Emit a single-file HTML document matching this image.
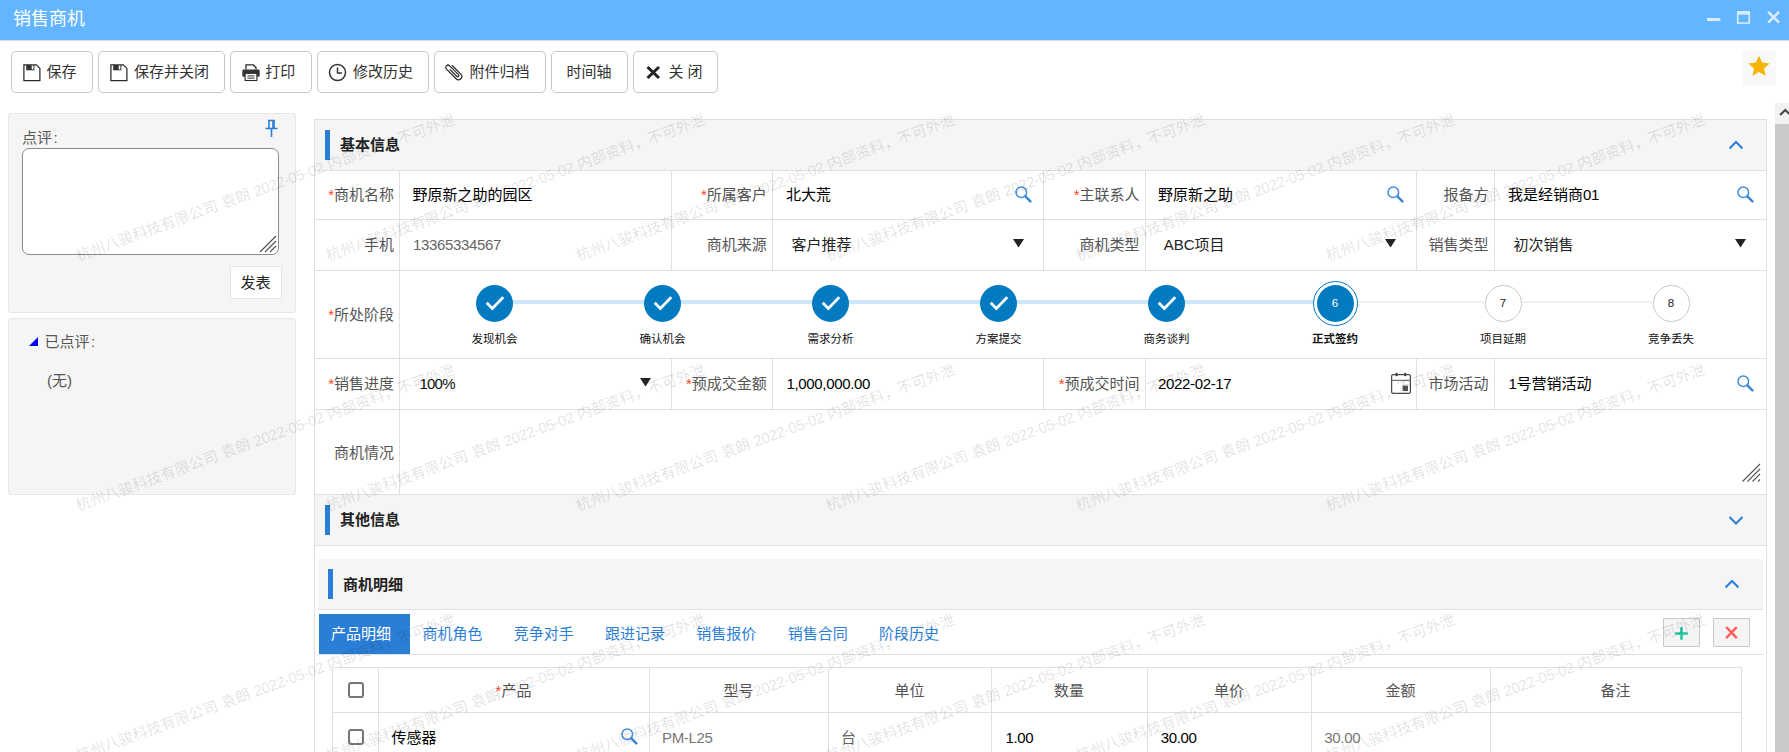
<!DOCTYPE html>
<html lang="zh-CN"><head><meta charset="utf-8"><title>销售商机</title>
<style>
*{box-sizing:border-box;margin:0;padding:0}
html,body{width:1789px;height:752px;overflow:hidden;background:#fff}
body{font-family:"Liberation Sans","Noto Sans CJK SC",sans-serif;font-size:15px;color:#333;position:relative}
.abs{position:absolute}
.t{position:absolute;white-space:nowrap;line-height:20px;height:20px}
.lbl{color:#555;text-align:right}
.val{color:#000}
.num{letter-spacing:-0.34px}
.req{color:#ff4422}
.hl{position:absolute;height:1px;background:#e0e0e0}
.vl{position:absolute;width:1px;background:#e0e0e0}
.btn{position:absolute;top:51px;height:42px;border:1px solid #c6c6c6;border-radius:5px;background:#fff}
.sechead{position:absolute;background:#f5f5f5}
.bar{position:absolute;width:5px;height:30px;background:#2b7ed6}
.sect{position:absolute;font-weight:bold;color:#222;white-space:nowrap;line-height:20px}
.wm{position:absolute;white-space:nowrap;color:rgba(0,0,0,0.12);word-spacing:0.3px;font-size:15px;line-height:20px;height:20px;transform-origin:0 100%;transform:rotate(-20deg);pointer-events:none}
.stepl{position:absolute;font-size:11.5px;color:#111;white-space:nowrap;text-align:center;width:100px;line-height:14px}
.tab{position:absolute;top:614px;height:40px;line-height:39px;color:#2b7ed6;white-space:nowrap}
</style></head>
<body>
<div class="abs" style="left:0;top:0;width:1789px;height:40px;background:#63b5ff"></div>
<div class="abs" style="left:0;top:40px;width:1789px;height:1px;background:#d9d9d9"></div>
<div class="t" style="left:13px;top:6.6px;font-size:18px;line-height:24px;height:24px;color:#fff">销售商机</div>
<svg class="abs" style="left:1700.9px;top:5px" width="84" height="26" viewBox="0 0 84 26"><rect x="6" y="13" width="13.3" height="3.1" fill="#d8ecff"/><rect x="36.7" y="7.5" width="11.6" height="10.6" fill="none" stroke="#d8ecff" stroke-width="1.6"/><rect x="36" y="6" width="13" height="3.7" fill="#d8ecff"/><path d="M67.2 6.8 L78 17.6 M78 6.8 L67.2 17.6" stroke="#d8ecff" stroke-width="2.6" stroke-linecap="butt"/></svg>
<div class="btn" style="left:11.3px;width:81.4px"></div>
<div class="btn" style="left:98.4px;width:126.2px"></div>
<div class="btn" style="left:230.4px;width:81.4px"></div>
<div class="btn" style="left:317.3px;width:111.4px"></div>
<div class="btn" style="left:434.3px;width:111.4px"></div>
<div class="btn" style="left:551.2px;width:76.4px"></div>
<div class="btn" style="left:633.1px;width:85.4px"></div>
<div class="t" style="left:46.5px;top:62px;">保存</div>
<div class="t" style="left:134px;top:62px;">保存并关闭</div>
<div class="t" style="left:265.3px;top:62px;">打印</div>
<div class="t" style="left:353px;top:62px;">修改历史</div>
<div class="t" style="left:469.6px;top:62px;">附件归档</div>
<div class="t" style="left:566.5px;top:62px;">时间轴</div>
<div class="t" style="left:668.4px;top:62px;">关 闭</div>
<svg class="abs" style="left:22.5px;top:63.9px" width="18" height="18" viewBox="0 0 18 18"><path d="M0.9 0.9 H13.4 L16.9 4.4 V16.7 H0.9 Z" fill="#fff" stroke="#2a2a2a" stroke-width="1.25" stroke-linejoin="miter"/><rect x="3.2" y="1" width="8.2" height="5.3" fill="#333"/><rect x="8.7" y="1.5" width="1.7" height="3.9" fill="#fff"/></svg>
<svg class="abs" style="left:109.6px;top:63.9px" width="18" height="18" viewBox="0 0 18 18"><path d="M0.9 0.9 H13.4 L16.9 4.4 V16.7 H0.9 Z" fill="#fff" stroke="#2a2a2a" stroke-width="1.25" stroke-linejoin="miter"/><rect x="3.2" y="1" width="8.2" height="5.3" fill="#333"/><rect x="8.7" y="1.5" width="1.7" height="3.9" fill="#fff"/></svg>
<svg class="abs" style="left:241.5px;top:63.8px" width="18" height="18" viewBox="0 0 18 18"><path d="M4 5.6 V0.9 H11.3 L14 3.4 V5.6" fill="#fff" stroke="#2a2a2a" stroke-width="1.3"/><rect x="0.3" y="5.4" width="17.4" height="7.4" rx="1.4" fill="#333"/><rect x="3.1" y="9.3" width="11.8" height="7.2" fill="#fff" stroke="#2a2a2a" stroke-width="1.1"/><rect x="5.4" y="11.4" width="7.2" height="1" fill="#333"/><rect x="5.4" y="13.6" width="7.2" height="1" fill="#333"/></svg>
<svg class="abs" style="left:328px;top:63px" width="19" height="19" viewBox="0 0 19 19"><circle cx="9.5" cy="9.5" r="8" fill="none" stroke="#333" stroke-width="1.5"/><path d="M9.5 4.5 V10 H14" fill="none" stroke="#333" stroke-width="1.5"/></svg>
<svg class="abs" style="left:443.8px;top:62px" width="20" height="20" viewBox="0 0 20 20"><g transform="rotate(-45 10 10)"><path d="M13.3 4.5 V16.3 A3.3 3.3 0 0 1 6.7 16.3 V2.6 A2.3 2.3 0 0 1 11.3 2.6 V15 A1.2 1.2 0 0 1 8.9 15 V5.5" fill="none" stroke="#2a2a2a" stroke-width="1.25" stroke-linecap="round"/></g></svg>
<svg class="abs" style="left:645px;top:64px" width="17" height="17" viewBox="0 0 17 17"><path d="M2.5 3 L14 14 M14 3 L2.5 14" stroke="#222" stroke-width="3" stroke-linecap="butt"/></svg>
<div class="abs" style="left:1742px;top:51px;width:34px;height:35px;background:#f8f8f8"></div>
<svg class="abs" style="left:1747px;top:54px" width="24" height="24" viewBox="0 0 24 24"><path d="M12 1.8 L15.1 8.6 L22.6 9.4 L17 14.4 L18.6 21.8 L12 18 L5.4 21.8 L7 14.4 L1.4 9.4 L8.9 8.6 Z" fill="#f5b400"/></svg>
<div class="abs" style="left:8px;top:113px;width:288px;height:200px;background:#f5f5f5;border:1px solid #e6e6e6;border-radius:3px"></div>
<div class="abs" style="left:8px;top:318px;width:288px;height:177px;background:#f5f5f5;border:1px solid #e6e6e6;border-radius:3px"></div>
<div class="t" style="left:22px;top:128px;color:#555">点评<span style="margin-left:1.5px">:</span></div>
<div class="abs" style="left:22px;top:148px;width:257px;height:107px;background:#fff;border:1px solid #8a8a8a;border-radius:7px"></div>
<svg class="abs" style="left:258px;top:234px" width="20" height="20" viewBox="0 0 20 20"><path d="M2 18 L18 2 M7 18 L18 7 M12 18 L18 12" stroke="#555" stroke-width="1.2"/></svg>
<svg class="abs" style="left:264px;top:119px" width="15" height="19" viewBox="0 0 15 19"><path d="M4 1.5 H11 M5 1.5 V9 M10 1.5 V9 M1.5 9.5 H13.5 M7.5 9.5 V18" fill="none" stroke="#2b7ed6" stroke-width="1.6"/><rect x="8.2" y="2" width="1.8" height="7" fill="#2b7ed6"/></svg>
<div class="abs" style="left:230px;top:266px;width:52px;height:33px;background:#fff;border:1px solid #e6e6e6"></div>
<div class="t" style="left:240.5px;top:273px;color:#222">发表</div>
<svg class="abs" style="left:28px;top:336px" width="11" height="11" viewBox="0 0 11 11"><path d="M1 10 H10 V1 Z" fill="#0000f0"/></svg>
<div class="t" style="left:44.5px;top:331.7px;color:#555">已点评<span style="margin-left:1.5px">:</span></div>
<div class="t" style="left:47px;top:371px;color:#555">(无)</div>
<div class="vl" style="left:314px;top:119px;height:640px"></div>
<div class="vl" style="left:1766px;top:119px;height:640px"></div>
<div class="sechead" style="left:315px;top:120px;width:1451px;height:50px"></div>
<div class="hl" style="left:314px;top:119px;width:1453px"></div>
<div class="bar" style="left:325px;top:130px"></div>
<div class="sect" style="left:340px;top:135px">基本信息</div>
<svg class="abs" style="left:1727.8px;top:139px" width="16" height="12" viewBox="0 0 16 12"><path d="M1.5 9.5 L8 3 L14.5 9.5" fill="none" stroke="#2b7ed6" stroke-width="2"/></svg>
<div class="hl" style="left:314px;top:170px;width:1453px"></div>
<div class="hl" style="left:314px;top:219px;width:1453px"></div>
<div class="hl" style="left:314px;top:270px;width:1453px"></div>
<div class="hl" style="left:314px;top:358px;width:1453px"></div>
<div class="hl" style="left:314px;top:409px;width:1453px"></div>
<div class="hl" style="left:314px;top:494px;width:1453px"></div>
<div class="hl" style="left:314px;top:545px;width:1453px"></div>
<div class="vl" style="left:399px;top:170px;height:324px"></div>
<div class="vl" style="left:671px;top:170px;height:100px"></div>
<div class="vl" style="left:671px;top:358px;height:51px"></div>
<div class="vl" style="left:772px;top:170px;height:100px"></div>
<div class="vl" style="left:772px;top:358px;height:51px"></div>
<div class="vl" style="left:1043px;top:170px;height:100px"></div>
<div class="vl" style="left:1043px;top:358px;height:51px"></div>
<div class="vl" style="left:1145px;top:170px;height:100px"></div>
<div class="vl" style="left:1145px;top:358px;height:51px"></div>
<div class="vl" style="left:1416px;top:170px;height:100px"></div>
<div class="vl" style="left:1416px;top:358px;height:51px"></div>
<div class="vl" style="left:1494px;top:170px;height:100px"></div>
<div class="vl" style="left:1494px;top:358px;height:51px"></div>
<div class="t lbl" style="right:1395px;top:185.3px"><span class="req">*</span>商机名称</div>
<div class="t val" style="left:412.5px;top:184.5px;">野原新之助的园区</div>
<div class="t lbl" style="right:1022.2px;top:185.3px"><span class="req">*</span>所属客户</div>
<div class="t val" style="left:786px;top:184.5px;">北大荒</div>
<svg class="abs" style="left:1014px;top:184.9px" width="20" height="20" viewBox="0 0 20 20"><circle cx="7.3" cy="7.3" r="5.3" fill="none" stroke="#3f8cdb" stroke-width="1.5"/><path d="M11.4 11.4 L16.4 16.4" stroke="#3a86d2" stroke-width="2.5" stroke-linecap="round"/></svg>
<div class="t lbl" style="right:649.5px;top:185.3px"><span class="req">*</span>主联系人</div>
<div class="t val" style="left:1158px;top:184.5px;">野原新之助</div>
<svg class="abs" style="left:1386px;top:184.9px" width="20" height="20" viewBox="0 0 20 20"><circle cx="7.3" cy="7.3" r="5.3" fill="none" stroke="#3f8cdb" stroke-width="1.5"/><path d="M11.4 11.4 L16.4 16.4" stroke="#3a86d2" stroke-width="2.5" stroke-linecap="round"/></svg>
<div class="t lbl" style="right:300.5px;top:185.3px">报备方</div>
<div class="t val" style="left:1508px;top:184.5px;">我是经销商<span class="num">01</span></div>
<svg class="abs" style="left:1736px;top:184.9px" width="20" height="20" viewBox="0 0 20 20"><circle cx="7.3" cy="7.3" r="5.3" fill="none" stroke="#3f8cdb" stroke-width="1.5"/><path d="M11.4 11.4 L16.4 16.4" stroke="#3a86d2" stroke-width="2.5" stroke-linecap="round"/></svg>
<div class="t lbl" style="right:1395px;top:235.3px">手机</div>
<div class="t num" style="left:413px;top:234.5px;color:#666">13365334567</div>
<div class="t lbl" style="right:1022.2px;top:235.3px">商机来源</div>
<div class="t " style="left:791.5px;top:234.5px;color:#222">客户推荐</div>
<svg class="abs" style="left:1013px;top:238.6px" width="11" height="9" viewBox="0 0 11 9"><path d="M0 0 H11 L5.5 8.5 Z" fill="#222"/></svg>
<div class="t lbl" style="right:649.5px;top:235.3px">商机类型</div>
<div class="t " style="left:1163.7px;top:234.5px;color:#222">ABC项目</div>
<svg class="abs" style="left:1385.3px;top:238.6px" width="11" height="9" viewBox="0 0 11 9"><path d="M0 0 H11 L5.5 8.5 Z" fill="#222"/></svg>
<div class="t lbl" style="right:300.5px;top:235.3px">销售类型</div>
<div class="t " style="left:1513.5px;top:234.5px;color:#222">初次销售</div>
<svg class="abs" style="left:1734.7px;top:238.6px" width="11" height="9" viewBox="0 0 11 9"><path d="M0 0 H11 L5.5 8.5 Z" fill="#222"/></svg>
<div class="t lbl" style="right:1395px;top:304.8px"><span class="req">*</span>所处阶段</div>
<div class="t lbl" style="right:1395px;top:374.3px"><span class="req">*</span>销售进度</div>
<div class="t " style="left:419.5px;top:373.5px;color:#111;letter-spacing:-0.8px">100%</div>
<svg class="abs" style="left:640px;top:378px" width="11" height="9" viewBox="0 0 11 9"><path d="M0 0 H11 L5.5 8.5 Z" fill="#222"/></svg>
<div class="t lbl" style="right:1022.2px;top:374.3px"><span class="req">*</span>预成交金额</div>
<div class="t val num" style="left:786.5px;top:373.5px;">1,000,000.00</div>
<div class="t lbl" style="right:649.5px;top:374.3px"><span class="req">*</span>预成交时间</div>
<div class="t val num" style="left:1158px;top:373.5px;">2022-02-17</div>
<div class="t lbl" style="right:300.5px;top:374.3px">市场活动</div>
<div class="t val" style="left:1508.5px;top:373.5px;"><span class="num">1</span>号营销活动</div>
<svg class="abs" style="left:1736px;top:373.9px" width="20" height="20" viewBox="0 0 20 20"><circle cx="7.3" cy="7.3" r="5.3" fill="none" stroke="#3f8cdb" stroke-width="1.5"/><path d="M11.4 11.4 L16.4 16.4" stroke="#3a86d2" stroke-width="2.5" stroke-linecap="round"/></svg>
<div class="t lbl" style="right:1395px;top:443.3px">商机情况</div>
<svg class="abs" style="left:1390px;top:372px" width="22" height="23" viewBox="0 0 22 23"><rect x="1.6" y="2.5" width="18.8" height="18.8" rx="1.6" fill="#fff" stroke="#4a4a4a" stroke-width="1.25"/><path d="M1.6 8.4 H20.4" stroke="#777" stroke-width="1.3"/><rect x="5.4" y="0.8" width="2.4" height="3.4" rx="1.2" fill="#444"/><rect x="14" y="0.8" width="2.4" height="3.4" rx="1.2" fill="#444"/><rect x="12.6" y="13.6" width="5.4" height="5.4" fill="#555"/></svg>
<svg class="abs" style="left:1741px;top:463px" width="21" height="21" viewBox="0 0 21 21"><path d="M1.5 18.5 L19 1 M6.5 18.5 L19 6 M11.5 18.5 L19 11 M17 18.5 L19 16.5" stroke="#555" stroke-width="1.1"/></svg>
<div class="abs" style="left:494.5px;top:300px;width:840.5px;height:4px;background:#cfe7fa"></div>
<div class="abs" style="left:1335px;top:301px;width:336px;height:2px;background:#f0f0f0"></div>
<div class="abs" style="left:476px;top:285px;width:37px;height:37px;border-radius:50%;background:#047bc1"></div>
<svg class="abs" style="left:482.5px;top:293.5px" width="24" height="20" viewBox="-12 -10 24 20"><path d="M-8.3 -1.3 L-2.6 4.4 L8.3 -6.9" fill="none" stroke="#fff" stroke-width="2.8"/></svg>
<div class="stepl" style="left:444.5px;top:332px;">发现机会</div>
<div class="abs" style="left:644px;top:285px;width:37px;height:37px;border-radius:50%;background:#047bc1"></div>
<svg class="abs" style="left:650.5px;top:293.5px" width="24" height="20" viewBox="-12 -10 24 20"><path d="M-8.3 -1.3 L-2.6 4.4 L8.3 -6.9" fill="none" stroke="#fff" stroke-width="2.8"/></svg>
<div class="stepl" style="left:612.5px;top:332px;">确认机会</div>
<div class="abs" style="left:812px;top:285px;width:37px;height:37px;border-radius:50%;background:#047bc1"></div>
<svg class="abs" style="left:818.5px;top:293.5px" width="24" height="20" viewBox="-12 -10 24 20"><path d="M-8.3 -1.3 L-2.6 4.4 L8.3 -6.9" fill="none" stroke="#fff" stroke-width="2.8"/></svg>
<div class="stepl" style="left:780.5px;top:332px;">需求分析</div>
<div class="abs" style="left:980px;top:285px;width:37px;height:37px;border-radius:50%;background:#047bc1"></div>
<svg class="abs" style="left:986.5px;top:293.5px" width="24" height="20" viewBox="-12 -10 24 20"><path d="M-8.3 -1.3 L-2.6 4.4 L8.3 -6.9" fill="none" stroke="#fff" stroke-width="2.8"/></svg>
<div class="stepl" style="left:948.5px;top:332px;">方案提交</div>
<div class="abs" style="left:1148px;top:285px;width:37px;height:37px;border-radius:50%;background:#047bc1"></div>
<svg class="abs" style="left:1154.5px;top:293.5px" width="24" height="20" viewBox="-12 -10 24 20"><path d="M-8.3 -1.3 L-2.6 4.4 L8.3 -6.9" fill="none" stroke="#fff" stroke-width="2.8"/></svg>
<div class="stepl" style="left:1116.5px;top:332px;">商务谈判</div>
<div class="abs" style="left:1312.5px;top:280.5px;width:45px;height:45px;border-radius:50%;border:1.5px solid #047bc1;background:#fff"></div>
<div class="abs" style="left:1316.5px;top:284.5px;width:37px;height:37px;border-radius:50%;background:#047bc1"></div>
<div class="t" style="left:1316.5px;top:293px;width:37px;text-align:center;color:#fff;font-size:11.5px">6</div>
<div class="stepl" style="left:1285px;top:332px;font-weight:bold;">正式签约</div>
<div class="abs" style="left:1484.5px;top:285px;width:37px;height:37px;border-radius:50%;background:#fff;border:1px solid #c8c8c8"></div>
<div class="t" style="left:1484.5px;top:293px;width:37px;text-align:center;color:#222;font-size:11.5px">7</div>
<div class="stepl" style="left:1453px;top:332px;">项目延期</div>
<div class="abs" style="left:1652.5px;top:285px;width:37px;height:37px;border-radius:50%;background:#fff;border:1px solid #c8c8c8"></div>
<div class="t" style="left:1652.5px;top:293px;width:37px;text-align:center;color:#222;font-size:11.5px">8</div>
<div class="stepl" style="left:1621px;top:332px;">竞争丢失</div>
<div class="sechead" style="left:315px;top:495px;width:1451px;height:50px"></div>
<div class="bar" style="left:325px;top:505px"></div>
<div class="sect" style="left:340px;top:510px">其他信息</div>
<svg class="abs" style="left:1727.8px;top:513.6px" width="16" height="12" viewBox="0 0 16 12"><path d="M1.5 3 L8 9.5 L14.5 3" fill="none" stroke="#2b7ed6" stroke-width="2"/></svg>
<div class="sechead" style="left:318px;top:559px;width:1445px;height:50px"></div>
<div class="hl" style="left:318px;top:609px;width:1445px"></div>
<div class="bar" style="left:328px;top:569px"></div>
<div class="sect" style="left:343px;top:575px">商机明细</div>
<svg class="abs" style="left:1724px;top:578px" width="16" height="12" viewBox="0 0 16 12"><path d="M1.5 9.5 L8 3 L14.5 9.5" fill="none" stroke="#2b7ed6" stroke-width="2"/></svg>
<div class="abs" style="left:319px;top:614px;width:90.5px;height:40px;background:#2b7ed6"></div>
<div class="hl" style="left:318px;top:654px;width:1445px"></div>
<div class="tab" style="left:331px;color:#fff">产品明细</div>
<div class="tab" style="left:422.5px;">商机角色</div>
<div class="tab" style="left:513.8px;">竞争对手</div>
<div class="tab" style="left:605px;">跟进记录</div>
<div class="tab" style="left:696.3px;">销售报价</div>
<div class="tab" style="left:787.8px;">销售合同</div>
<div class="tab" style="left:879px;">阶段历史</div>
<div class="abs" style="left:1663px;top:618px;width:37px;height:29px;background:#f4f4f4;border:1px solid #c8c8c8;border-radius:1px"></div>
<div class="abs" style="left:1713px;top:618px;width:37px;height:29px;background:#f4f4f4;border:1px solid #c8c8c8;border-radius:1px"></div>
<svg class="abs" style="left:1674px;top:625.6px" width="15" height="15" viewBox="0 0 15 15"><path d="M7.5 1.2 V13.8 M1.2 7.5 H13.8" stroke="#1ec49b" stroke-width="2.5"/></svg>
<svg class="abs" style="left:1724px;top:625px" width="15" height="15" viewBox="0 0 15 15"><path d="M2.2 2 L12.8 13.2 M12.8 2 L2.2 13.2" stroke="#ff5c5c" stroke-width="2.5"/></svg>
<div class="hl" style="left:332px;top:667px;width:1410px"></div>
<div class="hl" style="left:332px;top:712px;width:1410px"></div>
<div class="vl" style="left:332px;top:667px;height:93px"></div>
<div class="vl" style="left:378px;top:667px;height:93px"></div>
<div class="vl" style="left:649px;top:667px;height:93px"></div>
<div class="vl" style="left:828px;top:667px;height:93px"></div>
<div class="vl" style="left:991px;top:667px;height:93px"></div>
<div class="vl" style="left:1147px;top:667px;height:93px"></div>
<div class="vl" style="left:1311px;top:667px;height:93px"></div>
<div class="vl" style="left:1490px;top:667px;height:93px"></div>
<div class="vl" style="left:1741px;top:667px;height:93px"></div>
<div class="abs" style="left:348px;top:682px;width:16px;height:16px;border:2px solid #76767a;border-radius:3px;background:#fff"></div>
<div class="abs" style="left:348px;top:729px;width:16px;height:16px;border:2px solid #76767a;border-radius:3px;background:#fff"></div>
<div class="t" style="left:378px;top:680.5px;width:271px;text-align:center;color:#555"><span class="req">*</span>产品</div>
<div class="t" style="left:649px;top:680.5px;width:179px;text-align:center;color:#555">型号</div>
<div class="t" style="left:828px;top:680.5px;width:163px;text-align:center;color:#555">单位</div>
<div class="t" style="left:991px;top:680.5px;width:156px;text-align:center;color:#555">数量</div>
<div class="t" style="left:1147px;top:680.5px;width:164px;text-align:center;color:#555">单价</div>
<div class="t" style="left:1311px;top:680.5px;width:179px;text-align:center;color:#555">金额</div>
<div class="t" style="left:1490px;top:680.5px;width:251px;text-align:center;color:#555">备注</div>
<div class="t val" style="left:391.5px;top:727.5px;">传感器</div>
<svg class="abs" style="left:619.5px;top:726.9px" width="20" height="20" viewBox="0 0 20 20"><circle cx="7.3" cy="7.3" r="5.3" fill="none" stroke="#3f8cdb" stroke-width="1.5"/><path d="M11.4 11.4 L16.4 16.4" stroke="#3a86d2" stroke-width="2.5" stroke-linecap="round"/></svg>
<div class="t num" style="left:662px;top:727.5px;color:#777">PM-L25</div>
<div class="t " style="left:841px;top:727.5px;color:#666">台</div>
<div class="t val num" style="left:1005.5px;top:727.5px;">1.00</div>
<div class="t val num" style="left:1160.7px;top:727.5px;">30.00</div>
<div class="t num" style="left:1324.3px;top:727.5px;color:#777">30.00</div>
<div class="abs" style="left:1775px;top:103px;width:14px;height:650px;background:#f1f1f1"></div>
<div class="abs" style="left:1775px;top:124px;width:14px;height:628px;background:#c9c9c9"></div>
<svg class="abs" style="left:1775px;top:102px" width="14" height="22" viewBox="0 0 15 22"><path d="M5.5 13.2 L11 7.7 L16.5 13.2" fill="none" stroke="#444" stroke-width="2.2"/></svg>
<div class="wm" style="left:79.5px;top:246px">杭州八骏科技有限公司 袁朗 <span style="letter-spacing:-0.3px">2022-05-02</span> 内部资料，不可外泄</div>
<div class="wm" style="left:329.5px;top:246px">杭州八骏科技有限公司 袁朗 <span style="letter-spacing:-0.3px">2022-05-02</span> 内部资料，不可外泄</div>
<div class="wm" style="left:579.5px;top:246px">杭州八骏科技有限公司 袁朗 <span style="letter-spacing:-0.3px">2022-05-02</span> 内部资料，不可外泄</div>
<div class="wm" style="left:829.5px;top:246px">杭州八骏科技有限公司 袁朗 <span style="letter-spacing:-0.3px">2022-05-02</span> 内部资料，不可外泄</div>
<div class="wm" style="left:1079.5px;top:246px">杭州八骏科技有限公司 袁朗 <span style="letter-spacing:-0.3px">2022-05-02</span> 内部资料，不可外泄</div>
<div class="wm" style="left:1329.5px;top:246px">杭州八骏科技有限公司 袁朗 <span style="letter-spacing:-0.3px">2022-05-02</span> 内部资料，不可外泄</div>
<div class="wm" style="left:79.5px;top:496px">杭州八骏科技有限公司 袁朗 <span style="letter-spacing:-0.3px">2022-05-02</span> 内部资料，不可外泄</div>
<div class="wm" style="left:329.5px;top:496px">杭州八骏科技有限公司 袁朗 <span style="letter-spacing:-0.3px">2022-05-02</span> 内部资料，不可外泄</div>
<div class="wm" style="left:579.5px;top:496px">杭州八骏科技有限公司 袁朗 <span style="letter-spacing:-0.3px">2022-05-02</span> 内部资料，不可外泄</div>
<div class="wm" style="left:829.5px;top:496px">杭州八骏科技有限公司 袁朗 <span style="letter-spacing:-0.3px">2022-05-02</span> 内部资料，不可外泄</div>
<div class="wm" style="left:1079.5px;top:496px">杭州八骏科技有限公司 袁朗 <span style="letter-spacing:-0.3px">2022-05-02</span> 内部资料，不可外泄</div>
<div class="wm" style="left:1329.5px;top:496px">杭州八骏科技有限公司 袁朗 <span style="letter-spacing:-0.3px">2022-05-02</span> 内部资料，不可外泄</div>
<div class="wm" style="left:79.5px;top:746px">杭州八骏科技有限公司 袁朗 <span style="letter-spacing:-0.3px">2022-05-02</span> 内部资料，不可外泄</div>
<div class="wm" style="left:329.5px;top:746px">杭州八骏科技有限公司 袁朗 <span style="letter-spacing:-0.3px">2022-05-02</span> 内部资料，不可外泄</div>
<div class="wm" style="left:579.5px;top:746px">杭州八骏科技有限公司 袁朗 <span style="letter-spacing:-0.3px">2022-05-02</span> 内部资料，不可外泄</div>
<div class="wm" style="left:829.5px;top:746px">杭州八骏科技有限公司 袁朗 <span style="letter-spacing:-0.3px">2022-05-02</span> 内部资料，不可外泄</div>
<div class="wm" style="left:1079.5px;top:746px">杭州八骏科技有限公司 袁朗 <span style="letter-spacing:-0.3px">2022-05-02</span> 内部资料，不可外泄</div>
<div class="wm" style="left:1329.5px;top:746px">杭州八骏科技有限公司 袁朗 <span style="letter-spacing:-0.3px">2022-05-02</span> 内部资料，不可外泄</div>
</body></html>
